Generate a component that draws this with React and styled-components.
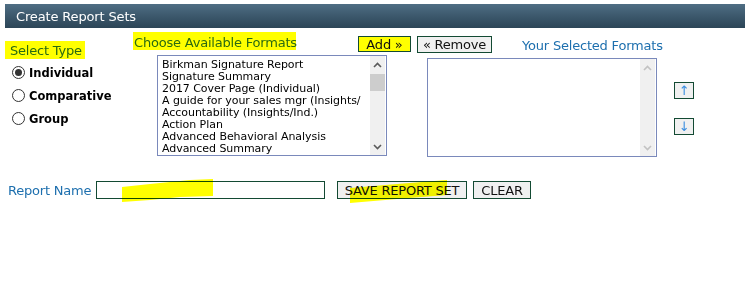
import React from 'react'
import styled, { createGlobalStyle } from 'styled-components'

const GlobalStyle = createGlobalStyle`
  html, body {
    margin: 0;
    padding: 0;
    background: #fff;
  }
  body {
    width: 746px;
    height: 295px;
    overflow: hidden;
    font-family: "DejaVu Sans", Verdana, sans-serif;
    color: #000;
  }
`

const Page = styled.div`
  padding-top: 4px;
`

const Header = styled.div`
  height: 24px;
  margin: 0 1px 0 5px;
  padding-left: 11px;
  display: flex;
  align-items: center;
  background: linear-gradient(to bottom, #4f6e84 0%, #3c586c 50%, #2c4557 100%);
  color: #fff;
  font-size: 13px;
  letter-spacing: -0.15px;
`

const Panel = styled.div`
  display: flex;
  height: 130px;
`

const TypeColumn = styled.div`
  width: 127px;
  padding: 12px 0 0 5px;
  box-sizing: border-box;
`

const Marker = styled.span`
  display: inline-block;
  background: #ffff00;
  color: #2a6a10;
  font-size: 13px;
  line-height: 13px;
  letter-spacing: -0.2px;
  white-space: nowrap;
`

const TypeLabel = styled(Marker)`
  width: 80px;
  padding: 3px 0 2px 5px;
  box-sizing: border-box;
`

const RadioList = styled.div`
  margin: 2px 0 0 7px;
  display: flex;
  flex-direction: column;
`

const RadioRow = styled.label`
  height: 23px;
  display: flex;
  align-items: center;
  gap: 4px;
  font-size: 11.5px;
  font-weight: bold;
`

const RadioDot = styled.span`
  width: 13px;
  height: 13px;
  box-sizing: border-box;
  border: 1px solid #333;
  border-radius: 50%;
  display: flex;
  align-items: center;
  justify-content: center;
  background: #fff;

  &::after {
    content: '';
    width: 7px;
    height: 7px;
    border-radius: 50%;
    background: ${p => (p.$checked ? '#333' : 'transparent')};
  }
`

const FormatsArea = styled.div`
  flex: 1;
  display: flex;
  flex-direction: column;
`

const TopRow = styled.div`
  height: 27px;
  padding-top: 4px;
  box-sizing: border-box;
  display: flex;
  align-items: flex-start;
`

const ChooseLabel = styled(Marker)`
  width: 163px;
  margin-left: 6px;
  padding: 4px 0 1px 1px;
  box-sizing: border-box;
`

const Button = styled.button`
  height: ${p => p.$h || 18}px;
  width: ${p => p.$w}px;
  margin-left: ${p => p.$ml || 0}px;
  margin-top: ${p => p.$mt || 0}px;
  padding: 0;
  box-sizing: border-box;
  border: 1px solid #134a33;
  background: ${p => (p.$marked ? '#ffff00' : '#f0f0f0')};
  font-family: "DejaVu Sans", Verdana, sans-serif;
  font-size: 13px;
  letter-spacing: -0.2px;
  color: #111;
  display: flex;
  align-items: center;
  justify-content: center;
  line-height: 1;
`

const LinkLabel = styled.span`
  color: #1d6fae;
  font-size: 13px;
  letter-spacing: -0.2px;
  white-space: nowrap;
  margin-left: ${p => p.$ml || 0}px;
  margin-top: ${p => p.$mt || 0}px;
`

const NameLabel = styled(LinkLabel)`
  width: 88px;
`

const ListsRow = styled.div`
  display: flex;
  align-items: flex-start;
`

const ListBox = styled.div`
  width: 230px;
  height: ${p => p.$h}px;
  margin-left: ${p => p.$ml}px;
  margin-top: ${p => p.$mt || 0}px;
  box-sizing: border-box;
  border: 1px solid #7a89bb;
  display: flex;
  background: #fff;
`

const Items = styled.div`
  flex: 1;
  overflow: hidden;
  padding: 3px 0 0 4px;
  font-size: 11px;
  line-height: 12px;
  white-space: nowrap;
  letter-spacing: -0.05px;
`

const Scrollbar = styled.div`
  width: 15px;
  margin-right: 1px;
  background: #f0f0f0;
  display: flex;
  flex-direction: column;
`

const ScrollArrow = styled.div`
  height: 17px;
  display: flex;
  align-items: center;
  justify-content: center;
`

const Track = styled.div`
  flex: 1;
`

const Thumb = styled.div`
  height: 17px;
  margin-top: 1px;
  background: #cdcdcd;
`

const ArrowColumn = styled.div`
  margin: 27px 0 0 17px;
  display: flex;
  flex-direction: column;
  gap: 19px;
`

const ArrowButton = styled(Button)`
  color: #3b8ee0;
  font-size: 13px;
`

const ReportRow = styled.div`
  margin-top: 23px;
  height: 18px;
  display: flex;
  align-items: center;
  padding-left: 8px;
`

const NameInput = styled.input`
  width: 229px;
  height: 18px;
  box-sizing: border-box;
  border: 1px solid #134a33;
  padding: 0 3px;
  outline: none;
`

const Overlayed = styled.div`
  position: relative;
  display: flex;
`

const Swipe = styled.svg`
  position: absolute;
  left: ${p => p.$x}px;
  top: ${p => p.$y}px;
  mix-blend-mode: multiply;
  pointer-events: none;
`

const Chevron = ({ up, disabled }) => (
  <svg width="9" height="6" viewBox="0 0 9 6">
    <polyline
      points={up ? '1,5 4.5,1.5 8,5' : '1,1 4.5,4.5 8,1'}
      fill="none"
      stroke={disabled ? '#c2c2c2' : '#5a5a5a'}
      strokeWidth="1.6"
    />
  </svg>
)

const available = [
  'Birkman Signature Report',
  'Signature Summary',
  '2017 Cover Page (Individual)',
  'A guide for your sales mgr (Insights/',
  'Accountability (Insights/Ind.)',
  'Action Plan',
  'Advanced Behavioral Analysis',
  'Advanced Summary',
]

const types = ['Individual', 'Comparative', 'Group']

export default function App() {
  return (
    <Page>
      <GlobalStyle />
      <Header>Create Report Sets</Header>
      <Panel>
        <TypeColumn>
          <TypeLabel>Select Type</TypeLabel>
          <RadioList>
            {types.map((t, i) => (
              <RadioRow key={t}>
                <RadioDot $checked={i === 0} />
                {t}
              </RadioRow>
            ))}
          </RadioList>
        </TypeColumn>
        <FormatsArea>
          <TopRow>
            <ChooseLabel>Choose Available Formats</ChooseLabel>
            <Button $w={53} $h={16} $ml={62} $mt={4} $marked>Add »</Button>
            <Button $w={75} $h={17} $ml={6} $mt={4}>« Remove</Button>
            <LinkLabel $ml={30} $mt={6}>Your Selected Formats</LinkLabel>
          </TopRow>
          <ListsRow>
            <ListBox $h={101} $ml={30}>
              <Items>
                {available.map(a => (
                  <div key={a}>{a}</div>
                ))}
              </Items>
              <Scrollbar>
                <ScrollArrow><Chevron up /></ScrollArrow>
                <Track><Thumb /></Track>
                <ScrollArrow><Chevron /></ScrollArrow>
              </Scrollbar>
            </ListBox>
            <ListBox $h={99} $ml={40} $mt={3}>
              <Items />
              <Scrollbar>
                <ScrollArrow><Chevron up disabled /></ScrollArrow>
                <Track />
                <ScrollArrow><Chevron disabled /></ScrollArrow>
              </Scrollbar>
            </ListBox>
            <ArrowColumn>
              <ArrowButton $w={20} $h={17}>↑</ArrowButton>
              <ArrowButton $w={20} $h={17}>↓</ArrowButton>
            </ArrowColumn>
          </ListsRow>
        </FormatsArea>
      </Panel>
      <ReportRow>
        <NameLabel>Report Name</NameLabel>
        <Overlayed>
          <NameInput type="text" />
          <Swipe $x={26} $y={-2} width="96" height="24" viewBox="0 0 96 24">
            <polygon points="0,8 28,5 68,1 91,0 91,17 58,18 28,21 0,23" fill="#ffff00" />
          </Swipe>
        </Overlayed>
        <Overlayed>
          <Button $w={130} $ml={12}>SAVE REPORT SET</Button>
          <Swipe $x={25} $y={-2} width="100" height="25" viewBox="0 0 100 25">
            <polygon points="0,9 47,5 97,1 97,16 47,20 0,24" fill="#ffff00" />
          </Swipe>
        </Overlayed>
        <Button $w={58} $ml={6}>CLEAR</Button>
      </ReportRow>
    </Page>
  )
}
